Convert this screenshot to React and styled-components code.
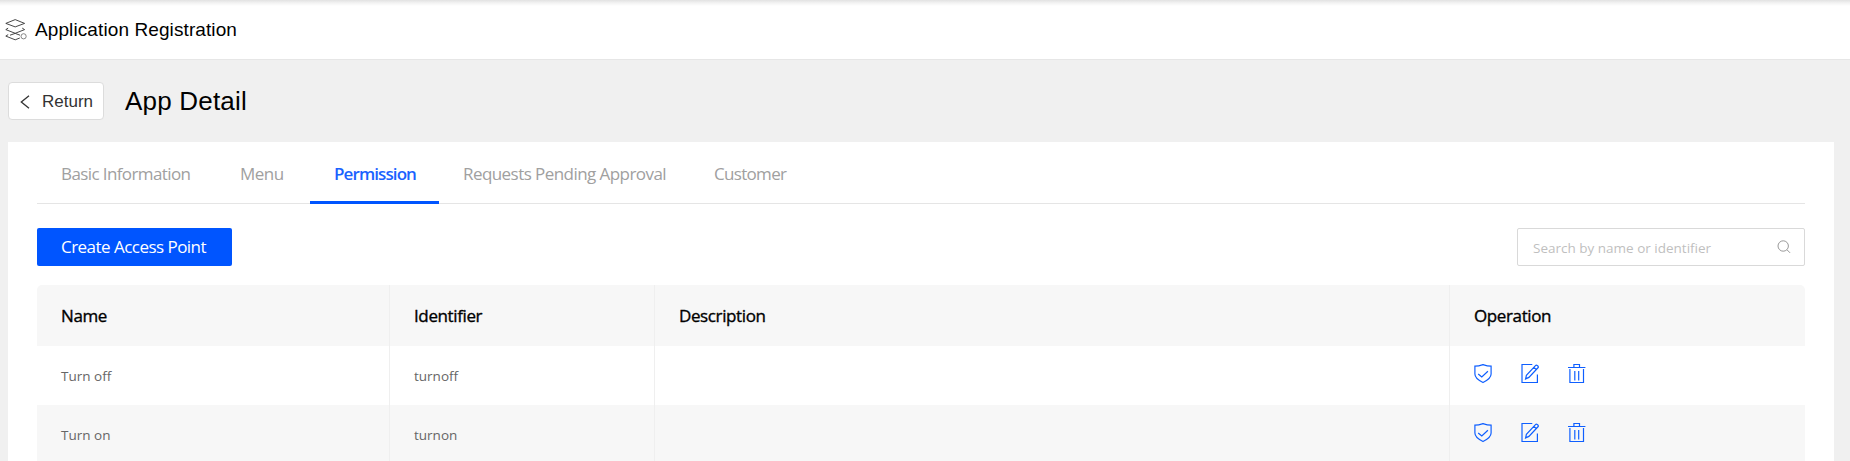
import React from "react";
import styled, { createGlobalStyle } from "styled-components";

const Global = createGlobalStyle`
  * { box-sizing: border-box; }
  body { margin: 0; background: #f0f0f0; overflow: hidden; }
  button, input { font: inherit; }
`;

const ui = `"Open Sans", "Noto Sans", sans-serif`;
const arial = `"Liberation Sans", Arial, sans-serif`;

const Page = styled.div`
  height: 461px;
  overflow: hidden;
  background: #f0f0f0;
  font-family: ${ui};
`;
const Header = styled.header`
  display: flex;
  align-items: center;
  height: 60px;
  padding-left: 5px;
  background: linear-gradient(#e2e2e2, #f3f3f3 3px, #fff 6px);
  border-bottom: 1px solid #e6e6e6;
`;
const HeaderTitle = styled.h1`
  margin: 0 0 0 7px;
  font: 400 19px/22px ${arial};
  letter-spacing: 0.1px;
  color: #000;
`;
const TitleBar = styled.div`
  display: flex;
  align-items: center;
  height: 82px;
  padding-left: 8px;
`;
const ReturnButton = styled.button`
  display: flex;
  align-items: center;
  gap: 12px;
  width: 96px;
  height: 38px;
  padding: 1px 0 0 11px;
  border: 1px solid #dcdcdc;
  border-radius: 4px;
  background: #fff;
  font: 400 17px/20px ${arial};
  color: #333;
`;
const PageTitle = styled.h2`
  margin: 0 0 0 21px;
  font: 400 26px/30px ${arial};
  letter-spacing: 0.2px;
  color: #000;
`;
const Card = styled.main`
  margin: 0 16px 0 8px;
  height: 340px;
  padding: 0 29px;
  background: #fff;
`;
const Tabs = styled.nav`
  display: flex;
  height: 62px;
  border-bottom: 1px solid #e5e5e5;
`;
const Tab = styled.a`
  width: ${(p) => p.$width}px;
  height: 62px;
  padding: 19px 0 0 24px;
  border-bottom: ${(p) => (p.$active ? "3px solid #0055ff" : "0")};
  font-size: 17px;
  line-height: 26px;
  font-weight: ${(p) => (p.$active ? 600 : 400)};
  letter-spacing: ${(p) => p.$track}px;
  color: ${(p) => (p.$active ? "#1a62ff" : "#a0a0a0")};
  white-space: nowrap;
`;
const Toolbar = styled.div`
  display: flex;
  justify-content: space-between;
  padding: 24px 0 19px;
`;
const CreateButton = styled.button`
  width: 195px;
  height: 38px;
  padding: 0 0 0 24px;
  border: 0;
  border-radius: 2px;
  background: #0055ff;
  color: #fff;
  font-size: 17px;
  line-height: 38px;
  letter-spacing: -0.53px;
  text-align: left;
  white-space: nowrap;
`;
const SearchBox = styled.label`
  display: flex;
  align-items: center;
  width: 288px;
  height: 38px;
  padding: 0 13px 0 15px;
  border: 1px solid #d9d9d9;
  border-radius: 2px;
`;
const SearchInput = styled.input`
  flex: 1;
  min-width: 0;
  height: 36px;
  padding: 2px 0 0;
  border: 0;
  outline: 0;
  background: transparent;
  font-size: 13.5px;
  letter-spacing: 0;
  &::placeholder { color: #bfbfbf; opacity: 1; }
`;
const Table = styled.div`
  border-radius: 5px 5px 0 0;
  overflow: hidden;
`;
const Row = styled.div`
  display: grid;
  grid-template-columns: 353px 265px 795px 355px;
  height: ${(p) => (p.$head ? 61 : 59)}px;
  background: ${(p) => (p.$shade ? "#f7f7f7" : "#fff")};
`;
const Cell = styled.div`
  padding: 19px 0 0 24px;
  border-right: 1px solid #efefef;
  font-size: 13.5px;
  line-height: 22px;
  color: #666;
  &:last-child { border-right: 0; }
`;
const HeadCell = styled(Cell)`
  padding-top: 18px;
  font-size: 17px;
  line-height: 26px;
  letter-spacing: -0.38px;
  -webkit-text-stroke: 0.35px #000;
  color: #000;
`;
const Actions = styled.div`
  display: flex;
  gap: 27px;
  margin: -2px 0 0 -1px;
  svg { display: block; }
`;

const StackIcon = () => (
  <svg width="23" height="24" viewBox="0 0 23 24" fill="none" stroke="#333" strokeWidth="0.9" strokeLinejoin="round">
    <path d="M0.8 5.4 10.2 1.6l9.4 3.8-9.4 3.5z" />
    <path d="M3.2 10.1.8 11.6l9.4 3.7 9.4-3.7-2.4-1.5M3.2 16.6.8 18.1l9.4 3.7 4.6-1.8M5 17.2l5.2-1.8 4.8 1.8" />
    <circle cx="18.6" cy="18.3" r="2.6" stroke="#777" />
  </svg>
);
const BackIcon = () => (
  <svg width="10" height="14" viewBox="0 0 10 14" fill="none" stroke="#333" strokeWidth="1.3">
    <path d="M9 .8 1.3 7 9 13.2" />
  </svg>
);
const SearchIcon = () => (
  <svg width="14" height="14" viewBox="0 0 14 14" fill="none" stroke="#999" strokeWidth="1">
    <circle cx="6.2" cy="6" r="5.2" />
    <path d="m9.9 9.7 3.2 3.2" />
  </svg>
);
const Glyph = ({ children }) => (
  <svg width="20" height="21" viewBox="0 0 20 21" fill="none" stroke="#0f5fff" strokeWidth="1.2">
    {children}
  </svg>
);
const ShieldIcon = () => (
  <Glyph>
    <path d="M1.9 3.2C5 3.2 7.5 2.5 10 1.6c2.5.9 5 1.6 8.1 1.6v7.9c0 4.2-4.2 6.6-8.1 8.4-3.9-1.8-8.1-4.2-8.1-8.4z" />
    <path d="m5.2 11 3.6 3 6.1-5.7" />
  </Glyph>
);
const EditIcon = () => (
  <Glyph>
    <path d="M12.3 1.5H2v18h15.4v-8" />
    <path d="m5.6 15.9.8-3.6 9.3-9.9c.8-.8 3.4 1.2 2.5 2.1l-9.3 9.9zM14 4.4l2.4 2.2" />
  </Glyph>
);
const TrashIcon = () => (
  <Glyph>
    <path d="M1 4.5h17.4M6.9 4.5v-3h5.6v3M2.9 6v13.5h13.6V6M7.8 8v9.5M11.7 8v9.5" />
  </Glyph>
);

const tabs = [
  { label: "Basic Information", width: 179, track: -0.6 },
  { label: "Menu", width: 94, track: -0.5 },
  { label: "Permission", width: 129, track: -0.9 },
  { label: "Requests Pending Approval", width: 251, track: -0.56 },
  { label: "Customer", width: 120, track: -0.68 },
];
const columns = ["Name", "Identifier", "Description", "Operation"];
const rows = [
  { name: "Turn off", id: "turnoff" },
  { name: "Turn on", id: "turnon" },
];

export default function App() {
  return (
    <Page>
      <Global />
      <Header>
        <StackIcon />
        <HeaderTitle>Application Registration</HeaderTitle>
      </Header>
      <TitleBar>
        <ReturnButton><BackIcon />Return</ReturnButton>
        <PageTitle>App Detail</PageTitle>
      </TitleBar>
      <Card>
        <Tabs>
          {tabs.map((t) => (
            <Tab key={t.label} $width={t.width} $track={t.track} $active={t.label === "Permission"}>{t.label}</Tab>
          ))}
        </Tabs>
        <Toolbar>
          <CreateButton>Create Access Point</CreateButton>
          <SearchBox>
            <SearchInput placeholder="Search by name or identifier" />
            <SearchIcon />
          </SearchBox>
        </Toolbar>
        <Table>
          <Row $head $shade>
            {columns.map((label) => <HeadCell key={label}>{label}</HeadCell>)}
          </Row>
          {rows.map((r, i) => (
            <Row key={r.id} $shade={i % 2 === 1}>
              <Cell>{r.name}</Cell>
              <Cell>{r.id}</Cell>
              <Cell />
              <Cell><Actions><ShieldIcon /><EditIcon /><TrashIcon /></Actions></Cell>
            </Row>
          ))}
        </Table>
      </Card>
    </Page>
  );
}
